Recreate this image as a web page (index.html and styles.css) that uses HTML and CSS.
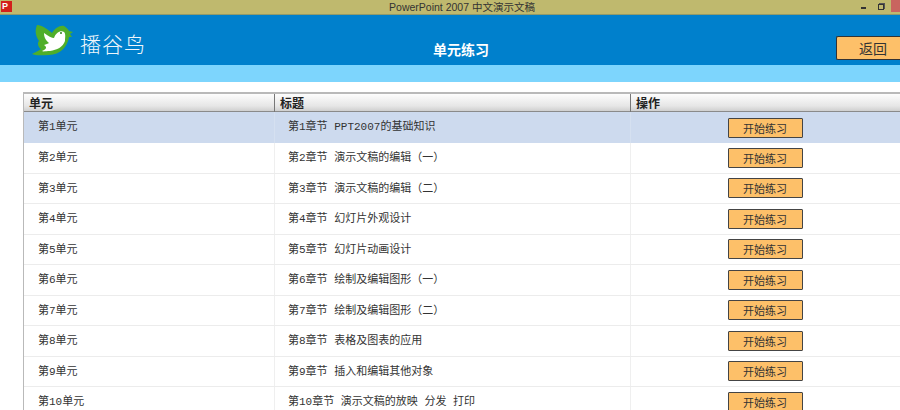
FILE: index.html
```html
<!DOCTYPE html>
<html lang="zh-CN">
<head>
<meta charset="utf-8">
<title>PowerPoint 2007 中文演示文稿</title>
<link rel="stylesheet" href="styles.css">
</head>
<body>
<div class="titlebar">
  <span class="app-icon">P</span>
  <span class="window-title">PowerPoint 2007 中文演示文稿</span>
  <span class="win-controls">
    <span class="win-min"></span>
    <span class="win-restore"></span>
    <span class="win-close"></span>
  </span>
</div>
<header class="banner">
  <div class="brand">
    <svg class="bird" viewBox="0 0 42 33" width="42" height="33">
      <path fill="#4fae2a" d="M5 1 C10 1 15 5 20 9 C23 4 28 1 32 2 C34 3 36 5 37 7 L41 8 L38 10 L40 13 L37 13 C36 22 28 31 17 31 C10 31 4 32 0 30 C3 28 7 27 9 25 C6 23 5 19 7 17 C3 11 3 6 5 1 Z"/>
      <path fill="#fff" d="M12 9 C16 12 20 14 22 14 C24 8 29 6 32 8 C34 10 33 14 33 17 C31 23 25 26 18 27 C14 27 11 28 10 27 C15 25 15 23 12 21 C14 20 16 20 17 19 C13 16 12 12 12 9 Z"/>
      <circle cx="29" cy="9" r="1" fill="#2e7d1a"/>
    </svg>
    <span class="brand-name">播谷鸟</span>
  </div>
  <h1 class="page-title">单元练习</h1>
  <button class="back-btn">返回</button>
</header>
<div class="subbar"></div>
<main class="content">
  <div class="grid">
    <div class="row head">
      <div class="cell">单元</div>
      <div class="cell">标题</div>
      <div class="cell">操作</div>
    </div>
    <div class="row body selected">
      <div class="cell">第1单元</div><div class="cell">第1章节 PPT2007的基础知识</div>
      <div class="cell action"><button class="start-btn">开始练习</button></div>
    </div>
    <div class="row body">
      <div class="cell">第2单元</div><div class="cell">第2章节 演示文稿的编辑（一）</div>
      <div class="cell action"><button class="start-btn">开始练习</button></div>
    </div>
    <div class="row body">
      <div class="cell">第3单元</div><div class="cell">第3章节 演示文稿的编辑（二）</div>
      <div class="cell action"><button class="start-btn">开始练习</button></div>
    </div>
    <div class="row body">
      <div class="cell">第4单元</div><div class="cell">第4章节 幻灯片外观设计</div>
      <div class="cell action"><button class="start-btn">开始练习</button></div>
    </div>
    <div class="row body">
      <div class="cell">第5单元</div><div class="cell">第5章节 幻灯片动画设计</div>
      <div class="cell action"><button class="start-btn">开始练习</button></div>
    </div>
    <div class="row body">
      <div class="cell">第6单元</div><div class="cell">第6章节 绘制及编辑图形（一）</div>
      <div class="cell action"><button class="start-btn">开始练习</button></div>
    </div>
    <div class="row body">
      <div class="cell">第7单元</div><div class="cell">第7章节 绘制及编辑图形（二）</div>
      <div class="cell action"><button class="start-btn">开始练习</button></div>
    </div>
    <div class="row body">
      <div class="cell">第8单元</div><div class="cell">第8章节 表格及图表的应用</div>
      <div class="cell action"><button class="start-btn">开始练习</button></div>
    </div>
    <div class="row body">
      <div class="cell">第9单元</div><div class="cell">第9章节 插入和编辑其他对象</div>
      <div class="cell action"><button class="start-btn">开始练习</button></div>
    </div>
    <div class="row body">
      <div class="cell">第10单元</div><div class="cell">第10章节 演示文稿的放映 分发 打印</div>
      <div class="cell action"><button class="start-btn">开始练习</button></div>
    </div>
  </div>
</main>
</body>
</html>
```
FILE: styles.css
```css
* { box-sizing: border-box; }
html, body { margin: 0; height: 410px; overflow: hidden; background: #fff; }
body { font-family: "Liberation Mono", "Noto Sans CJK SC", monospace; font-size: 11px; color: #333; }

.titlebar { height: 15px; background: #bfb96e; display: flex; align-items: center; justify-content: center; position: relative; border-bottom: 1px solid #8f9a6c; padding-left: 24px; }
.app-icon { position: absolute; left: 1px; top: 1px; width: 11px; height: 11px; background: #d3201b; color: #fff; font: bold 9px/10px "Liberation Sans", sans-serif; padding-left: 1px; }
.window-title { font-family: "Liberation Sans", "Noto Sans CJK SC", sans-serif; font-size: 10.5px; color: #333; line-height: 14px; }
.win-controls { position: absolute; right: 0; top: 0; display: flex; align-items: flex-start; }
.win-min { width: 5px; height: 2px; margin: 7px 12px 0 0; background: #333; }
.win-restore { width: 6px; height: 6px; margin: 4px 7px 0 0; border: 1px solid #333; box-shadow: 1px -1px 0 #555; }
.win-close { width: 9px; height: 12px; background: #c9655f; }

.banner { height: 50px; background: #0080cc; display: grid; grid-template-columns: 1fr auto 1fr; align-items: center; position: relative; }
.brand { display: flex; align-items: center; gap: 6px; padding: 0 0 0 32px; }
.bird { flex: none; }
.brand-name { color: #eef6fb; font-family: "Noto Sans CJK SC", sans-serif; font-weight: 300; font-size: 21px; letter-spacing: 1px; line-height: 30px; padding-top: 5px; }
.page-title { grid-column: 2; margin: 0 0 0 22px; color: #fff; font-family: "Noto Sans CJK SC", sans-serif; font-size: 14px; font-weight: 700; padding-top: 18px; }
.back-btn { position: absolute; right: 0; top: 21px; width: 64px; height: 24px; background: #fdc069; border: 1px solid #333; border-right: 0; border-radius: 2px 0 0 2px; padding: 0 0 0 9px; font-family: "Noto Sans CJK SC", sans-serif; font-size: 14px; color: #333; }

.subbar { height: 17px; background: #7dd5fd; }

.content { padding: 10px 0 0 23px; }
.grid { border: 1px solid #b9b9b9; border-right: 0; border-top-width: 2px; }
.row { display: grid; grid-template-columns: 251px 356px 1fr; }
.head { height: 18px; background: linear-gradient(#fdfdfd, #e6e6e6 70%, #cfcfcf); border-bottom: 1px solid #8a8a8a; font-weight: 700; color: #222; font-family: "Noto Sans CJK SC", sans-serif; }
.head .cell { padding-left: 5px; line-height: 18px; border-right: 1px solid #777; font-size: 12px; }
.head .cell:last-child { border-right: 0; }
.body { height: 30.5px; border-bottom: 1px solid #ececec; align-items: center; }
.body .cell { height: 100%; line-height: 30px; border-right: 1px solid #efefef; white-space: nowrap; overflow: hidden; }
.body .cell:first-child { padding-left: 14px; }
.body .cell:nth-child(2) { padding-left: 13px; }
.body .cell:last-child { border-right: 0; }
.selected { background: #cddaee; height: 31px; border-bottom: 0; }
.selected .cell { border-right-color: #d5e0f0; }
.action { display: flex; justify-content: center; align-items: center; padding-right: 0; }
.body .action { padding-left: 0; margin-left: -1px; }
.start-btn { width: 75px; height: 20px; padding: 0; background: #fdc069; border: 1px solid #444; border-radius: 1px; font-family: "Noto Sans CJK SC", sans-serif; font-size: 11px; line-height: 18px; color: #333; }
```
